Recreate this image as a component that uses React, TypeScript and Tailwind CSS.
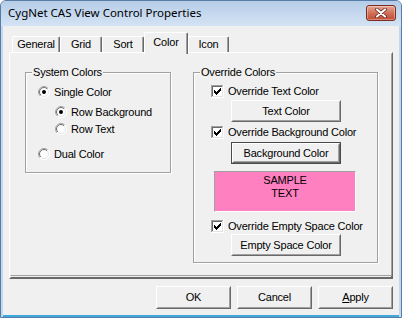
import React, { useId } from "react";

function Radio({ checked }: { checked?: boolean }) {
  const raw = useId();
  const id = raw.replace(/[^a-zA-Z0-9]/g, "");
  return (
    <svg width="12" height="12" viewBox="0 0 12 12" className="shrink-0">
      <defs>
        <linearGradient id={`ro${id}`} x1="0" y1="0" x2="1" y2="1">
          <stop offset="0.5" stopColor="#a0a0a0" />
          <stop offset="0.5" stopColor="#ffffff" />
        </linearGradient>
        <linearGradient id={`ri${id}`} x1="0" y1="0" x2="1" y2="1">
          <stop offset="0.5" stopColor="#696969" />
          <stop offset="0.5" stopColor="#e3e3e3" />
        </linearGradient>
      </defs>
      <circle cx="6" cy="6" r="5.5" fill="#fff" stroke={`url(#ro${id})`} />
      <circle cx="6" cy="6" r="4.5" fill="#fff" stroke={`url(#ri${id})`} />
      {checked && <circle cx="6" cy="6" r="2" fill="#000" />}
    </svg>
  );
}

function Check() {
  const starts = [2, 3, 4, 3, 2, 1, 0];
  return (
    <svg width="13" height="13" viewBox="0 0 13 13" shapeRendering="crispEdges" className="shrink-0">
      <rect x="0" y="0" width="13" height="13" fill="#fff" />
      <rect x="0" y="0" width="12" height="1" fill="#a0a0a0" />
      <rect x="0" y="0" width="1" height="12" fill="#a0a0a0" />
      <rect x="0" y="12" width="13" height="1" fill="#ffffff" />
      <rect x="12" y="0" width="1" height="13" fill="#ffffff" />
      <rect x="1" y="1" width="10" height="1" fill="#696969" />
      <rect x="1" y="1" width="1" height="10" fill="#696969" />
      <rect x="1" y="11" width="11" height="1" fill="#e3e3e3" />
      <rect x="11" y="1" width="1" height="11" fill="#e3e3e3" />
      {starts.map((s, i) => (
        <rect key={i} x={3 + i} y={3 + s} width="1" height="3" fill="#000" />
      ))}
    </svg>
  );
}

function Btn({
  children,
  className = "",
  focus = false,
}: {
  children: React.ReactNode;
  className?: string;
  focus?: boolean;
}) {
  const classic = (
    <div className="h-full border border-t-white border-l-white border-b-[#696969] border-r-[#696969]">
      <div className="h-full flex items-center justify-center bg-[#f0f0f0] border border-t-[#f0f0f0] border-l-[#f0f0f0] border-b-[#a0a0a0] border-r-[#a0a0a0] text-black">
        {children}
      </div>
    </div>
  );
  if (focus) {
    return <div className={`border border-[#4a4a4a] ${className}`}>{classic}</div>;
  }
  return <div className={className}>{classic}</div>;
}

function Tab({ label, w, selected }: { label: string; w: string; selected?: boolean }) {
  if (selected) {
    return (
      <div
        className={`${w} h-[22px] -mb-[2px] relative z-10 bg-[#f0f0f0] border-t border-l border-white border-r border-r-[#696969] shadow-[inset_-1px_0_0_#a0a0a0] rounded-t-[2px] flex justify-center pt-[3px]`}
      >
        <span className="leading-[13px]">{label}</span>
      </div>
    );
  }
  return (
    <div
      className={`${w} h-[16px] bg-[#f0f0f0] border-t border-l border-white border-r border-r-[#696969] shadow-[inset_-1px_0_0_#a0a0a0] rounded-t-[2px] flex justify-center items-center`}
    >
      <span className="leading-[13px]">{label}</span>
    </div>
  );
}

function Group({
  label,
  className,
  children,
}: {
  label: string;
  className: string;
  children: React.ReactNode;
}) {
  return (
    <div
      className={`relative border border-[#a0a0a0] shadow-[inset_1px_1px_0_#fff,1px_1px_0_#fff] ${className}`}
    >
      <span className="absolute -top-[7px] left-[6px] px-[1px] bg-[#f0f0f0] leading-[13px]">
        {label}
      </span>
      {children}
    </div>
  );
}

export default function App() {
  return (
    <div className="w-[402px] h-[318px] flex flex-col bg-[#c2d8ef] border border-[#587ca8] rounded-t-[6px] overflow-hidden font-['Liberation_Sans',Arial,sans-serif] text-[11px] tracking-[-0.2px] text-black">
      {/* Title bar */}
      <div className="h-[25px] shrink-0 flex items-start justify-between pl-[7px] pr-[5px] bg-gradient-to-b from-[#b6cde8] to-[#d4e3f4]">
        <span className="mt-[4px] text-[11.5px] leading-[16px] tracking-normal font-['Noto_Sans',sans-serif] text-black">
          CygNet CAS View Control Properties
        </span>
        <div className="mt-[4px] w-[30px] h-[16px] rounded-[3px] border border-[#7e2a1c] bg-gradient-to-b from-[#e7a593] via-[#d0705a] to-[#c24a33] shadow-[inset_0_0_0_1px_rgba(255,255,255,0.35)] flex items-center justify-center">
          <svg width="12" height="10" viewBox="0 0 12 10">
            <path d="M2 1.5 L10 8.5 M10 1.5 L2 8.5" stroke="#5a1d12" strokeWidth="3.6" strokeLinecap="round" />
            <path d="M2 1.5 L10 8.5 M10 1.5 L2 8.5" stroke="#ffffff" strokeWidth="2.2" strokeLinecap="round" />
          </svg>
        </div>
      </div>

      {/* Client area */}
      <div className="flex-1 mx-[2px] mb-[2px] bg-[#f0f0f0] flex flex-col pt-[6px] px-[6px] shadow-[0_2px_0_#3fa9dc]">
        {/* Tabs */}
        <div className="flex items-end h-[20px] pl-[3px]">
          <Tab label="General" w="w-[48px]" />
          <Tab label="Grid" w="w-[42px]" />
          <Tab label="Sort" w="w-[42px]" />
          <Tab label="Color" w="w-[44px]" selected />
          <Tab label="Icon" w="w-[41px]" />
        </div>

        {/* Panel */}
        <div className="h-[227px] border-2 border-t-white border-l-white border-b-[#696969] border-r-[#696969]">
          <div className="h-full border border-t-[#f0f0f0] border-l-[#f0f0f0] border-b-[#a0a0a0] border-r-[#a0a0a0] -m-[1px] pl-[14px] pt-[18px] flex items-start gap-[22px]">
            <Group label="System Colors" className="w-[146px] h-[101px] flex flex-col pl-[12px]">
              <div className="h-[16px] mt-[11px] flex items-center gap-[4px]">
                <Radio checked />
                <span>Single Color</span>
              </div>
              <div className="h-[16px] mt-[4px] ml-[17px] flex items-center gap-[4px]">
                <Radio checked />
                <span>Row Background</span>
              </div>
              <div className="h-[16px] mt-[1px] ml-[17px] flex items-center gap-[4px]">
                <Radio />
                <span>Row Text</span>
              </div>
              <div className="h-[16px] mt-[9px] flex items-center gap-[4px]">
                <Radio />
                <span>Dual Color</span>
              </div>
            </Group>

            <Group label="Override Colors" className="w-[185px] h-[191px] flex flex-col">
              <div className="h-[16px] mt-[10px] ml-[17px] flex items-center gap-[4px]">
                <Check />
                <span>Override Text Color</span>
              </div>
              <Btn className="mt-[1px] ml-[37px] w-[110px] h-[22px]">Text Color</Btn>
              <div className="h-[16px] mt-[2px] ml-[17px] flex items-center gap-[4px]">
                <Check />
                <span>Override Background Color</span>
              </div>
              <Btn focus className="mt-[2px] ml-[37px] w-[110px] h-[22px]">
                Background Color
              </Btn>
              <div className="mt-[7px] ml-[20px] w-[142px] h-[41px] bg-[#ff80c0] border border-t-[#a0a0a0] border-l-[#a0a0a0] border-b-white border-r-white flex flex-col items-center pt-[2px] leading-[13px]">
                <span>SAMPLE</span>
                <span>TEXT</span>
              </div>
              <div className="h-[16px] mt-[6px] ml-[17px] flex items-center gap-[4px]">
                <Check />
                <span>Override Empty Space Color</span>
              </div>
              <Btn className="ml-[37px] w-[110px] h-[22px]">Empty Space Color</Btn>
            </Group>
          </div>
        </div>

        {/* Dialog buttons */}
        <div className="mt-[7px] h-[23px] flex justify-end gap-[6px]">
          <Btn className="w-[75px] h-[23px]">OK</Btn>
          <Btn className="w-[75px] h-[23px]">Cancel</Btn>
          <Btn className="w-[75px] h-[23px]">
            <span>
              <span className="underline underline-offset-[1px]">A</span>pply
            </span>
          </Btn>
        </div>
      </div>
    </div>
  );
}
